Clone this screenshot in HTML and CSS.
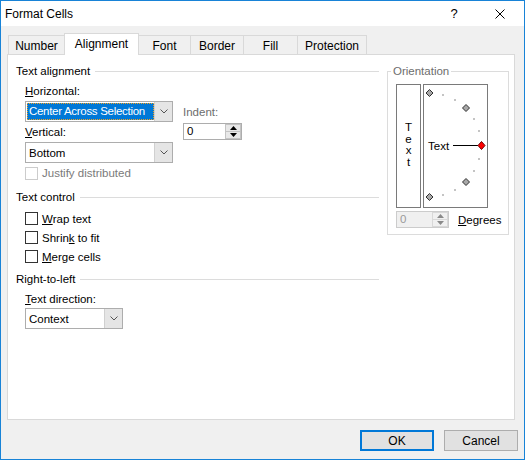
FILE: index.html
```html
<!DOCTYPE html>
<html>
<head>
<meta charset="utf-8">
<link rel="stylesheet" href="styles.css">
</head>
<body>
<div class="window">
  <div class="titlebar">
    <span class="title">Format Cells</span>
    <span class="cap-btn help">?</span>
    <span class="cap-btn close"><svg width="10" height="10" viewBox="0 0 10 10"><path d="M0.5 0.5 L9.5 9.5 M9.5 0.5 L0.5 9.5" stroke="#000" stroke-width="1" fill="none"/></svg></span>
  </div>
  <div class="client">
    <div class="tabs">
      <div class="tab t-number">Number</div>
      <div class="tab t-align active">Alignment</div>
      <div class="tab t-font">Font</div>
      <div class="tab t-border">Border</div>
      <div class="tab t-fill">Fill</div>
      <div class="tab t-prot">Protection</div>
    </div>
    <div class="panel">
      <div class="left">
        <div class="group-head"><span>Text alignment</span><i class="rule"></i></div>
        <div class="align-row">
          <div class="align-main">
            <div class="label"><u>H</u>orizontal:</div>
            <div class="combo combo-wide">
              <span class="combo-val"><span class="hl">Center Across Selection</span></span>
              <span class="combo-btn"><svg width="8" height="5" viewBox="0 0 8 5"><path d="M0.5 0.5 L4 4 L7.5 0.5" stroke="#555" fill="none"/></svg></span>
            </div>
            <div class="label gap2"><u>V</u>ertical:</div>
            <div class="combo combo-wide">
              <span class="combo-val"><span class="plain">Bottom</span></span>
              <span class="combo-btn"><svg width="8" height="5" viewBox="0 0 8 5"><path d="M0.5 0.5 L4 4 L7.5 0.5" stroke="#555" fill="none"/></svg></span>
            </div>
            <div class="check disabled justify"><span class="box"></span><span>Justify distributed</span></div>
          </div>
          <div class="indent">
            <div class="label grey">Indent:</div>
            <div class="spin spin-indent">
              <span class="spin-val">0</span>
              <span class="spin-btns">
                <span class="spin-up"><svg width="7" height="4" viewBox="0 0 7 4"><path d="M0 4 L3.5 0 L7 4 Z" fill="#000"/></svg></span>
                <span class="spin-down"><svg width="7" height="4" viewBox="0 0 7 4"><path d="M0 0 L3.5 4 L7 0 Z" fill="#000"/></svg></span>
              </span>
            </div>
          </div>
        </div>

        <div class="group-head gh-control"><span>Text control</span><i class="rule"></i></div>
        <div class="checks">
          <div class="check"><span class="box"></span><span><u>W</u>rap text</span></div>
          <div class="check"><span class="box"></span><span>Shrin<u>k</u> to fit</span></div>
          <div class="check"><span class="box"></span><span><u>M</u>erge cells</span></div>
        </div>

        <div class="group-head gh-rtl"><span>Right-to-left</span><i class="rule"></i></div>
        <div class="indented">
          <div class="label gap4"><u>T</u>ext direction:</div>
          <div class="combo combo-small">
            <span class="combo-val"><span class="plain">Context</span></span>
            <span class="combo-btn"><svg width="8" height="5" viewBox="0 0 8 5"><path d="M0.5 0.5 L4 4 L7.5 0.5" stroke="#555" fill="none"/></svg></span>
          </div>
        </div>
      </div>

      <fieldset class="orient">
        <legend>Orientation</legend>
        <div class="orient-boxes">
          <div class="vtext"><span>T</span><span>e</span><span>x</span><span>t</span></div>
          <div class="dial">
            <svg width="63" height="122" viewBox="0 0 63 122">
              <g fill="#c4c4c4">
                <rect x="54" y="45" width="2" height="2"/>
                <rect x="49" y="33" width="2" height="2"/>
                <rect x="30" y="14" width="2" height="2"/>
                <rect x="18" y="9" width="2" height="2"/>
                <rect x="54" y="73" width="2" height="2"/>
                <rect x="49" y="85" width="2" height="2"/>
                <rect x="30" y="104" width="2" height="2"/>
                <rect x="18" y="109" width="2" height="2"/>
              </g>
              <g fill="#a8a8a8" stroke="#303030" stroke-width="1">
                <polygon points="5.5,4.5 9,8 5.5,11.5 2,8"/>
                <polygon points="42,19.5 45.5,23 42,26.5 38.5,23"/>
                <polygon points="42,93.5 45.5,97 42,100.5 38.5,97"/>
                <polygon points="5.5,108.5 9,112 5.5,115.5 2,112"/>
              </g>
              <text x="4" y="65" class="dial-text">Text</text>
              <line x1="29" y1="60.5" x2="54" y2="60.5" stroke="#000" stroke-width="1"/>
              <polygon points="57.5,56.5 61,60.5 57.5,64.5 54,60.5" fill="#ff0000" stroke="#700000" stroke-width="1"/>
            </svg>
          </div>
        </div>
        <div class="deg-row">
          <div class="spin spin-deg">
            <span class="spin-val">0</span>
            <span class="spin-btns">
              <span class="spin-up"><svg width="7" height="4" viewBox="0 0 7 4"><path d="M0 4 L3.5 0 L7 4 Z" fill="#8a8a8a"/></svg></span>
              <span class="spin-down"><svg width="7" height="4" viewBox="0 0 7 4"><path d="M0 0 L3.5 4 L7 0 Z" fill="#8a8a8a"/></svg></span>
            </span>
          </div>
          <span class="deg-label"><u>D</u>egrees</span>
        </div>
      </fieldset>
    </div>
    <div class="buttons">
      <div class="btn ok">OK</div>
      <div class="btn">Cancel</div>
    </div>
  </div>
</div>
</body>
</html>
```
FILE: styles.css
```css
html, body {
  margin: 0;
  padding: 0;
  background: #ffffff;
}
body {
  font-family: "Liberation Sans", Arial, sans-serif;
  font-size: 11.5px;
  color: #000;
}
u { text-decoration: underline; text-underline-offset: 1px; }

.window {
  width: 525px;
  height: 460px;
  box-sizing: border-box;
  border: 1px solid #1883d7;
  background: #f0f0f0;
  display: flex;
  flex-direction: column;
}

.titlebar {
  height: 25px;
  background: #ffffff;
  display: flex;
  align-items: center;
}
.title {
  flex: 1;
  padding-left: 4px;
  font-size: 12px;
}
.cap-btn {
  width: 46px;
  height: 25px;
  display: flex;
  align-items: center;
  justify-content: center;
}
.help { font-size: 13px; }
.close { width: 46px; margin-right: 1px; }

.client {
  flex: 1;
  display: flex;
  flex-direction: column;
}

.tabs {
  display: flex;
  align-items: flex-end;
  height: 21px;
  margin-top: 7px;
  padding-left: 7px;
  position: relative;
  z-index: 2;
  font-size: 12px;
}
.tab {
  box-sizing: border-box;
  height: 19px;
  border: 1px solid #d9d9d9;
  border-bottom: none;
  background: #f0f0f0;
  display: flex;
  align-items: center;
  justify-content: center;
  padding-top: 1px;
  margin-left: -1px;
}
.tab.t-number { margin-left: 0; width: 57px; }
.tab.t-align { width: 75px; }
.tab.t-font { width: 53px; }
.tab.t-border { width: 54px; }
.tab.t-fill { width: 55px; }
.tab.t-prot { width: 70px; }
.tab.active {
  height: 22px;
  margin-bottom: -1px;
  background: #ffffff;
  position: relative;
  z-index: 3;
  padding-top: 0;
  padding-bottom: 2px;
}

.panel {
  box-sizing: border-box;
  width: 508px;
  height: 366px;
  margin-left: 6px;
  background: #ffffff;
  border: 1px solid #d9d9d9;
  display: flex;
  align-items: flex-start;
  padding: 8px 5px 0 8px;
  position: relative;
  z-index: 1;
}

.left {
  width: 363px;
  margin-right: 8px;
}

.group-head {
  height: 16px;
  line-height: 16px;
  display: flex;
  align-items: center;
}
.group-head .rule {
  flex: 1;
  height: 1px;
  background: #dcdcdc;
  margin-left: 5px;
}
.gh-control { margin-top: 8px; }
.gh-rtl { margin-top: 5px; }

.label {
  height: 16px;
  line-height: 16px;
}
.label.grey { color: #6d6d6d; }
.gap2 { margin-top: 2px; }
.gap4 { margin-top: 4px; }

.align-row {
  display: flex;
  margin-top: 4px;
  margin-left: 9px;
}
.align-main { width: 148px; }
.indent {
  margin-left: 10px;
  padding-top: 21px;
}

.combo {
  box-sizing: border-box;
  height: 21px;
  margin-top: 2px;
  border: 1px solid #adadad;
  background: #ffffff;
  display: flex;
}
.combo-wide { width: 148px; }
.combo-small { width: 98px; margin-top: 1px; }
.combo-val {
  flex: 1;
  display: flex;
  align-items: center;
  min-width: 0;
  overflow: hidden;
  white-space: nowrap;
}
.combo-val .hl {
  box-sizing: border-box;
  margin: 1px 0 1px 1px;
  height: 17px;
  width: 100%;
  padding-left: 2px;
  line-height: 17px;
  background: #0078d7;
  color: #ffffff;
  outline: 1px dotted #f0a020;
  outline-offset: -1px;
  overflow: hidden;
  letter-spacing: -0.3px;
}
.combo-val .plain { padding-left: 3px; }
.combo-btn {
  width: 17px;
  border-left: 1px solid #d0d0d0;
  background: #e5e5e5;
  display: flex;
  align-items: center;
  justify-content: center;
}

.spin {
  box-sizing: border-box;
  height: 17px;
  border: 1px solid #adadad;
  background: #ffffff;
  display: flex;
}
.spin-indent { width: 59px; margin-top: 3px; }
.spin-val {
  flex: 1;
  padding-left: 3px;
  line-height: 15px;
}
.spin-btns {
  width: 16px;
  display: flex;
  flex-direction: column;
}
.spin-up, .spin-down {
  flex: 1;
  background: #e8e8e8;
  border: 1px solid #c4c4c4;
  display: flex;
  align-items: center;
  justify-content: center;
}
.spin-up { border-bottom: none; }

.check {
  height: 19px;
  display: flex;
  align-items: center;
}
.check .box {
  box-sizing: border-box;
  width: 13px;
  height: 13px;
  border: 1px solid #333333;
  background: #ffffff;
  margin-right: 4px;
}
.check.justify {
  height: 16px;
  margin-top: 2px;
}
.check.disabled { color: #7a7a7a; }
.check.disabled .box { border-color: #cccccc; }
.checks {
  margin-top: 4px;
  margin-left: 9px;
}
.indented { margin-left: 9px; }

.orient {
  box-sizing: border-box;
  width: 122px;
  margin: 0;
  padding: 0 0 6px 8px;
  border: 1px solid #dcdcdc;
  min-inline-size: 0;
}
.orient legend {
  padding: 0 2px;
  margin-left: -5px;
  height: 16px;
  line-height: 16px;
  color: #6d6d6d;
}
.orient-boxes {
  display: flex;
  margin-top: 5px;
}
.vtext {
  box-sizing: border-box;
  width: 25px;
  height: 124px;
  border: 1px solid #7a7a7a;
  display: flex;
  flex-direction: column;
  align-items: center;
  justify-content: center;
  line-height: 11.5px;
  padding-bottom: 2px;
}
.dial {
  box-sizing: border-box;
  width: 65px;
  height: 124px;
  margin-left: 2px;
  border: 1px solid #7a7a7a;
}
.dial svg { display: block; }
.dial-text {
  font-family: "Liberation Sans", Arial, sans-serif;
  font-size: 11.5px;
  fill: #000;
}
.deg-row {
  display: flex;
  align-items: center;
  margin-top: 3px;
}
.spin-deg {
  width: 53px;
  background: #f0f0f0;
  border-color: #cccccc;
  color: #9a9a9a;
}
.spin-deg .spin-up, .spin-deg .spin-down {
  background: #f0f0f0;
  border-color: #d8d8d8;
}
.deg-label { margin-left: 9px; }

.buttons {
  display: flex;
  justify-content: flex-end;
  margin-top: 10px;
  margin-right: 6px;
  gap: 10px;
}
.btn {
  box-sizing: border-box;
  width: 74px;
  height: 21px;
  border: 1px solid #adadad;
  background: #e1e1e1;
  display: flex;
  align-items: center;
  justify-content: center;
  font-size: 12px;
}
.btn.ok { border: 2px solid #0078d7; }
```
